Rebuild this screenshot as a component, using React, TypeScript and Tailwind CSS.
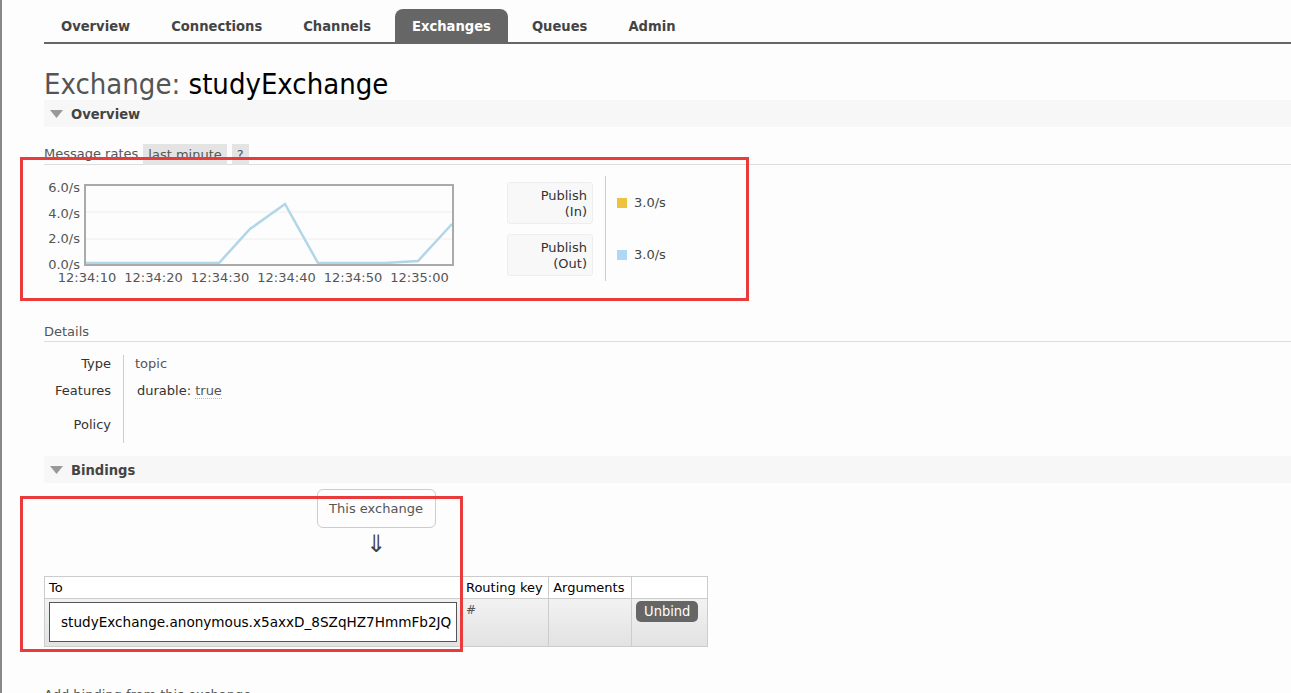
import React from 'react';

const tabs = ['Overview', 'Connections', 'Channels', 'Exchanges', 'Queues', 'Admin'];

function SectionBar({ title }: { title: string }) {
  return (
    <div className="flex items-center h-[27px] bg-[#f7f7f7] pl-[6px] gap-[8px]">
      <svg width="13" height="8" viewBox="0 0 13 8">
        <polygon points="0,0 13,0 6.5,8" fill="#999" />
      </svg>
      <span className="font-bold text-[14.6px] text-[#444] font-['DejaVu_Sans_Condensed',sans-serif]">{title}</span>
    </div>
  );
}

function RateChart() {
  const xs = ['12:34:10', '12:34:20', '12:34:30', '12:34:40', '12:34:50', '12:35:00'];
  const ys = ['6.0/s', '4.0/s', '2.0/s', '0.0/s'];
  // plot box: x 41..409, y 6..86 (0 at y 85)
  const pts = [
    [42, 84], [175, 84], [206, 50], [241, 25], [274, 84], [341, 84], [374, 82], [408, 45],
  ];
  return (
    <svg width="420" height="112" viewBox="0 0 420 112" className="block">
      {ys.map((y, i) => (
        <text key={y} x="36" y={13 + i * 25.7} textAnchor="end" fontSize="13" fill="#555" fontFamily="DejaVu Sans, sans-serif">{y}</text>
      ))}
      <line x1="42" y1="33" x2="408" y2="33" stroke="#eee" />
      <line x1="42" y1="60" x2="408" y2="60" stroke="#eee" />
      <polyline points={pts.map(p => p.join(',')).join(' ')} fill="none" stroke="#b0d6e8" strokeWidth="2.5" />
      <rect x="41" y="6" width="368" height="80" fill="none" stroke="#aaa" strokeWidth="2" />
      {xs.map((x, i) => (
        <text key={x} x={43 + i * 66.5} y="103" textAnchor="middle" fontSize="13" fill="#555" fontFamily="DejaVu Sans, sans-serif">{x}</text>
      ))}
    </svg>
  );
}

function LegendRow({ label, sub, color }: { label: string; sub: string; color: string }) {
  return (
    <div className="flex items-center">
      <div className="w-[86px] h-[42px] bg-[#f8f8f8] border border-[#eee] rounded-[3px] text-right pr-[5px] pt-[5px] leading-[16px] text-[#333]">
        {label}<br />{sub}
      </div>
      <div className="ml-[12px] border-l border-[#ccc] h-[52px] pl-[11px] flex items-center gap-[7px]">
        <span className={`w-[10px] h-[10px] ${color}`} />
        <span>3.0/s</span>
      </div>
    </div>
  );
}

export default function App() {
  return (
    <div className="min-h-[693px] bg-[#fdfdfd] border-l-2 border-[#888] font-['DejaVu_Sans',sans-serif] text-[13px] text-[#444] overflow-hidden relative">
      <div className="pl-[42px]">
        {/* Nav */}
        <div className="flex gap-[7px] pt-[9px] border-b-2 border-[#666] font-['DejaVu_Sans_Condensed',sans-serif] font-bold text-[14.6px]">
          {tabs.map((t) => (
            <div
              key={t}
              className={`px-[17px] h-[33px] flex items-center rounded-t-[8px] ${t === 'Exchanges' ? 'bg-[#666] text-white' : 'text-[#444]'}`}
            >
              {t}
            </div>
          ))}
        </div>

        <h1 className="mt-[25px] text-[29px] leading-[31px] font-['DejaVu_Sans_Condensed',sans-serif] text-[#555]">
          Exchange: <span className="text-black">studyExchange</span>
        </h1>

        <SectionBar title="Overview" />

        {/* Message rates */}
        <div className="mt-[16px] flex items-end gap-[5px] border-b border-[#ddd] text-[#555] leading-[21px]">
          <span>Message rates</span>
          <span className="bg-[#e4e4e4] px-[5px] h-[21px] -mb-px">last minute</span>
          <span className="bg-[#e4e4e4] px-[5px] h-[21px] -mb-px">?</span>
        </div>

        <div className="flex items-start pt-[14px]">
          <RateChart />
          <div className="flex flex-col ml-[43px] mt-[-3px]">
            <div className="h-[1px] ml-[98px] border-l border-[#ccc]" />
            <LegendRow label="Publish" sub="(In)" color="bg-[#edc240]" />
            <LegendRow label="Publish" sub="(Out)" color="bg-[#afd8f8]" />
          </div>
        </div>

        {/* Details */}
        <div className="mt-[32px] border-b border-[#ddd] text-[#555] leading-[18px]">Details</div>
        <div className="flex mt-[13px]">
          <div className="w-[79px] flex flex-col items-end pr-[12px] text-[#333]">
            <div className="h-[27px] leading-[16px] pt-[1px]">Type</div>
            <div className="h-[34px] leading-[16px] pt-[1px]">Features</div>
            <div className="h-[27px] leading-[16px] pt-[1px]">Policy</div>
          </div>
          <div className="border-l border-[#ccc] pl-[11px] text-[#555]">
            <div className="h-[27px] leading-[16px] pt-[1px]">topic</div>
            <div className="h-[34px] leading-[16px] pt-[1px] pl-[2px]">
              <span className="text-[#333]">durable:</span> <span className="border-b border-dotted border-[#bbb]">true</span>
            </div>
            <div className="h-[27px]" />
          </div>
        </div>

        <div className="mt-[13px]">
          <SectionBar title="Bindings" />
        </div>

        {/* Bindings */}
        <div className="w-[664px]">
          <div className="flex flex-col items-center">
            <div className="mt-[6px] border border-[#ccc] rounded-[6px] w-[119px] h-[39px] flex items-center justify-center text-[#555]">
              This exchange
            </div>
            <div className="text-[24px] leading-[26px] mt-[3px] text-[#444]">⇓</div>
          </div>
          <table className="mt-[19px] border-collapse text-[13px]">
            <thead>
              <tr className="h-[22px] bg-white text-black">
                <th className="border border-[#ccc] w-[417px] text-left font-normal px-[4px]">To</th>
                <th className="border border-[#ccc] w-[88px] text-left font-normal px-[4px]">Routing key</th>
                <th className="border border-[#ccc] w-[83px] text-left font-normal px-[4px]">Arguments</th>
                <th className="border border-[#ccc] w-[76px]"></th>
              </tr>
            </thead>
            <tbody>
              <tr className="h-[48px] bg-gradient-to-b from-[#f2f2f2] to-[#e2e2e2] align-top">
                <td className="border border-[#ccc] p-[3px] pl-[4px]">
                  <div className="h-[40px] w-[408px] bg-white border border-[#555] flex items-center pl-[11px] text-black text-[13.6px] whitespace-nowrap overflow-hidden">
                    studyExchange.anonymous.x5axxD_8SZqHZ7HmmFb2JQ
                  </div>
                </td>
                <td className="border border-[#ccc] px-[4px] pt-[2px] text-[#555] text-[12px]">#</td>
                <td className="border border-[#ccc]"></td>
                <td className="border border-[#ccc] px-[4px] pt-[2px]">
                  <div className="w-fit bg-[#666] text-white rounded-[5px] px-[8px] h-[21px] leading-[21px] text-[14.5px] font-['DejaVu_Sans_Condensed',sans-serif]">Unbind</div>
                </td>
              </tr>
            </tbody>
          </table>
        </div>

        <div className="mt-[38px] text-[#555]">Add binding from this exchange</div>
      </div>

      {/* annotation boxes */}
      <div className="absolute left-[18px] top-[157px] w-[729px] h-[144px] border-[3px] border-[#e93b3b] pointer-events-none" />
      <div className="absolute left-[18px] top-[496px] w-[443px] h-[156px] border-[3px] border-[#e93b3b] pointer-events-none" />
    </div>
  );
}
